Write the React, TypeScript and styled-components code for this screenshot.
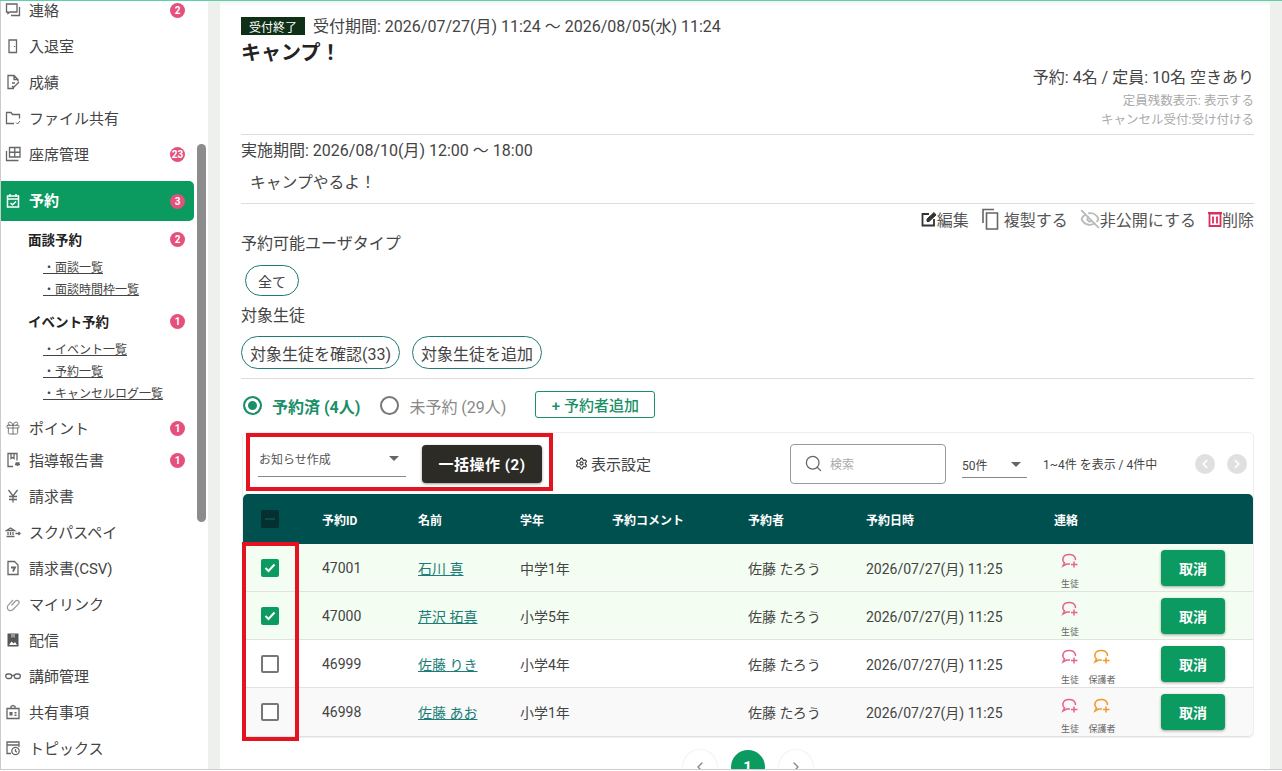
import React from 'react';
import styled, { createGlobalStyle } from 'styled-components';
import { ChevronLeft, ChevronRight, EyeOff, Gift, Search, Settings } from 'lucide-react';

const GlobalStyle = createGlobalStyle`
	html, body {
		margin: 0;
		height: 100%;
		overflow: hidden;
		background: #fff;
		font-family: Roboto, 'Noto Sans CJK JP', sans-serif;
		color: #333;
	}
	* {
		box-sizing: border-box;
	}
`;

const Ico = ({ children }: { children: React.ReactNode }) => (
	<svg width='16' height='16' viewBox='0 0 16 16' fill='none' stroke='#666' strokeWidth='1.3'>
		{children}
	</svg>
);

const navTop = [
	{ label: '連絡', badge: '2', icon: <Ico><path d='M1.500 2h10.500v8H5L3 11.500V10H1.500zM14.500 5v8.500H6' /></Ico> },
	{ label: '入退室', icon: <Ico><path d='M4 2h7.500v12.500H4zM9.500 8v1' /></Ico> },
	{ label: '成績', icon: <Ico><path d='M9 14.500H3V1.500h6l4 4v2M9 1.500v4h4M7 9h3M7 12l1.500 1.500L14 8' /></Ico> },
	{ label: 'ファイル共有', icon: <Ico><path d='M9 13.500H1.500V2.500H6l1.500 2h7v4' /><path d='M11 12.500l1.500 1.500 2.500-3' strokeWidth='1' /></Ico> },
	{ label: '座席管理', badge: '23', icon: <Ico><path d='M4.500 1.500H15v9.500H4.500zM9.750 1.500V11M4.500 6.250H15M1.500 5v9.500h12' /></Ico> },
];

const navBottom = [
	{ label: 'ポイント', badge: '1', icon: <Gift size={16} color='#666' strokeWidth={1.3} /> },
	{ label: '指導報告書', badge: '1', icon: <Ico><path d='M8 14.500H3V1.500h9v7M6 1.500v5l1.500-1 1.500 1v-5' /><path d='M10 12.500h5M10.500 11h4M12.500 14v-1' strokeWidth='1.600' /></Ico> },
	{ label: '請求書', icon: <Ico><path d='M3.500 2L8 8l4.500-6M8 8v6.500M4 8.500h8M4 11.500h8' /></Ico> },
	{ label: 'スクパスペイ', icon: <Ico><path d='M1.500 6.500L5.500 4l4 2.500zM1.500 12.500h8M3 8v3M5.500 8v3M8 8v3M10.500 9.500H15M13.500 8L15 9.500 13.500 11' /></Ico> },
	{ label: '請求書(CSV)', icon: <Ico><path d='M3 1.500h6.500L13 5v9.500H3z' /><path d='M6 7.500h4l-2 4' strokeWidth='1.800' /></Ico> },
	{ label: 'マイリンク', icon: <svg width='16' height='16' viewBox='0 0 16 16' fill='none' stroke='#999' strokeWidth='1.200'><path d='M6.500 9.500l4-4.500c1-1 2.300-.8 3 0 .7.800.7 2 0 2.800L8 13.500c-1.500 1.500-3.500 1.300-4.700.2C2 12.500 2 10.500 3.300 9.200L8 4' /></svg> },
	{ label: '配信', icon: <svg width='16' height='16' viewBox='0 0 16 16'><path d='M2.500 1.500h11v13h-11z' fill='#555' /><path d='M4 13l2.500-3.500 2 2 1.500-1.500 2 3z' fill='#fff' /><path d='M6 1.500h4v4.500L8 5 6 6z' fill='#999' /></svg> },
	{ label: '講師管理', icon: <svg width='16' height='16' viewBox='0 0 16 16' fill='none' stroke='#666' strokeWidth='1.300'><rect x='0.700' y='6' width='6' height='4.500' rx='2.200' /><rect x='9.300' y='6' width='6' height='4.500' rx='2.200' /><path d='M6.700 7.500h2.600' /></svg> },
	{ label: '共有事項', icon: <Ico><path d='M2 4.500h12v10H2zM6 4.500V2.500l2-1 2 1v2' /><path d='M4.500 8h3v3.500h-3zM9.500 8h2v1.500h-2zM9.500 10.500h2v1.500h-2z' fill='#666' stroke='none' /></Ico> },
	{ label: 'トピックス', icon: <Ico><path d='M6 13.500H2V2h12v5M2 5h12' /><circle cx='10.500' cy='11' r='3.700' /><path d='M10.500 9v2.200l1.500 1' /></Ico> },
];

const rows = [
	{ id: '47001', name: '石川 真', grade: '中学1年', checked: true, parent: false, tone: 'selected' },
	{ id: '47000', name: '芹沢 拓真', grade: '小学5年', checked: true, parent: false, tone: 'selected' },
	{ id: '46999', name: '佐藤 りき', grade: '小学4年', checked: false, parent: true, tone: 'plain' },
	{ id: '46998', name: '佐藤 あお', grade: '小学1年', checked: false, parent: true, tone: 'gray' },
];

const ChatPlus = ({ color }: { color: string }) => (
	<svg width='18' height='16' viewBox='0 0 18 16' fill='none' stroke={color} strokeWidth='1.500'>
		<path d='M9 11H5.500L2 13l1.500-3.200C2 8.500 1.500 7 2 5.200 2.700 2.800 5 1.500 8 1.500s5.600 1.300 6.300 3.700c.2.700.2 1.400.1 2' />
		<path d='M13 8.500v6M10 11.500h6.500' />
	</svg>
);

export default function App() {
	return (
		<Page>
			<GlobalStyle />
			<Sidebar>
				<NavList>
					{navTop.map(item => (
						<NavRow key={item.label}>
							<NavIcon>{item.icon}</NavIcon>
							<span>{item.label}</span>
							{item.badge && <Badge>{item.badge}</Badge>}
						</NavRow>
					))}
					<ActiveRow>
						<NavIcon>
							<svg width='16' height='16' viewBox='0 0 16 16' fill='none' stroke='#fff' strokeWidth='1.500'>
								<path d='M2.500 3h11v11h-11zM5 1v3M11 1v3M2.500 6h11M5.500 10l2 1.800L11 8.500' />
							</svg>
						</NavIcon>
						<span>予約</span>
						<Badge>3</Badge>
					</ActiveRow>
					<SubHeading $top={7}>
						<span>面談予約</span>
						<Badge>2</Badge>
					</SubHeading>
					<SubLinks>
						<SubLink>・面談一覧</SubLink>
						<SubLink>・面談時間枠一覧</SubLink>
					</SubLinks>
					<SubHeading $top={10}>
						<span>イベント予約</span>
						<Badge>1</Badge>
					</SubHeading>
					<SubLinks>
						<SubLink>・イベント一覧</SubLink>
						<SubLink>・予約一覧</SubLink>
						<SubLink>・キャンセルログ一覧</SubLink>
					</SubLinks>
					<BottomGroup>
						{navBottom.map((item, i) => (
							<NavRow key={item.label} $short={i === 0}>
								<NavIcon>{item.icon}</NavIcon>
								<span>{item.label}</span>
								{item.badge && <Badge>{item.badge}</Badge>}
							</NavRow>
						))}
					</BottomGroup>
				</NavList>
				<ScrollThumb />
			</Sidebar>

			<Main>
				<StatusLine>
					<StatusTag>受付終了</StatusTag>
					<span>受付期間: 2026/07/27(月) 11:24 〜 2026/08/05(水) 11:24</span>
				</StatusLine>
				<Title>キャンプ！</Title>
				<Capacity>予約: 4名 / 定員: 10名 空きあり</Capacity>
				<Note>定員残数表示: 表示する</Note>
				<Note>キャンセル受付:受け付ける</Note>
				<Rule $top={5} />
				<Period>実施期間: 2026/08/10(月) 12:00 〜 18:00</Period>
				<Description>キャンプやるよ！</Description>
				<Rule $top={8} />
				<Actions>
					<Action>
						<svg width='16' height='16' viewBox='0 0 16 16' fill='none' stroke='#333' strokeWidth='1.800'>
							<path d='M8 3H1.500v11.500H13V8' />
							<path d='M6 10.500V8l7-6.500L15 4l-7 6.500z' fill='#333' strokeWidth='1' />
						</svg>
						編集
					</Action>
					<Action>
						<svg width='23' height='22' viewBox='0 0 23 22' fill='none' stroke='#666' strokeWidth='1.600'>
							<path d='M2 15V1.500h11M5.500 5h11v16h-11z' />
						</svg>
						複製する
					</Action>
					<Action><EyeOff size={20} color='#bbb' strokeWidth={2.2} />非公開にする</Action>
					<Action>
						<svg width='14' height='16' viewBox='0 0 14 16' fill='none' stroke='#d9305f' strokeWidth='1.800'>
							<path d='M1.500 2.500h11v12.500h-11zM0 2h14M5 5.500v7M9 5.500v7' />
						</svg>
						削除
					</Action>
				</Actions>
				<SectionLabel>予約可能ユーザタイプ</SectionLabel>
				<SmallPill>全て</SmallPill>
				<SectionLabel $top={10}>対象生徒</SectionLabel>
				<PillRow>
					<Pill>対象生徒を確認(33)</Pill>
					<Pill>対象生徒を追加</Pill>
				</PillRow>
				<Rule $top={9} />
				<RadioRow>
					<Radio $on />
					<RadioLabel $on>予約済 (4人)</RadioLabel>
					<Radio />
					<RadioLabel>未予約 (29人)</RadioLabel>
					<AddButton>+ 予約者追加</AddButton>
				</RadioRow>

				<TableCard>
					<Toolbar>
						<BulkSelect>
							<span>お知らせ作成</span>
							<Caret />
						</BulkSelect>
						<BulkButton>一括操作 (2)</BulkButton>
						<SettingsLink><Settings size={13} color='#333' />表示設定</SettingsLink>
						<SearchBox>
							<Search size={19} color='#666' strokeWidth={1.6} />
							<span>検索</span>
						</SearchBox>
						<PerPage>
							<span>50件</span>
							<Caret />
						</PerPage>
						<RangeText>1~4件 を表示 / 4件中</RangeText>
						<PageDot $first><ChevronLeft size={14} color='#fff' strokeWidth={3} /></PageDot>
						<PageDot><ChevronRight size={14} color='#fff' strokeWidth={3} /></PageDot>
					</Toolbar>
					<HeadRow>
						<CheckCell><HeadCheck /></CheckCell>
						<span>予約ID</span>
						<span>名前</span>
						<span>学年</span>
						<span>予約コメント</span>
						<span>予約者</span>
						<span>予約日時</span>
						<span>連絡</span>
						<span />
					</HeadRow>
					{rows.map(row => (
						<BodyRow key={row.id} $tone={row.tone}>
							<CheckCell>
								<RowCheck $checked={row.checked}>
									{row.checked && (
										<svg width='14' height='14' viewBox='0 0 14 14' fill='none' stroke='#fff' strokeWidth='2'>
											<path d='M2.500 7l3 3 6-6.500' />
										</svg>
									)}
								</RowCheck>
							</CheckCell>
							<span>{row.id}</span>
							<NameLink>{row.name}</NameLink>
							<span>{row.grade}</span>
							<span />
							<span>佐藤 たろう</span>
							<span>2026/07/27(月) 11:25</span>
							<ContactCell>
								<ContactItem>
									<ChatPlus color='#e5648f' />
									<small>生徒</small>
								</ContactItem>
								{row.parent && (
									<ContactItem>
										<ChatPlus color='#f09a2e' />
										<small>保護者</small>
									</ContactItem>
								)}
							</ContactCell>
							<CancelButton>取消</CancelButton>
						</BodyRow>
					))}
				</TableCard>
				<Pager>
					<PagerArrow><ChevronLeft size={16} color='#888' /></PagerArrow>
					<PagerCurrent>1</PagerCurrent>
					<PagerArrow><ChevronRight size={16} color='#888' /></PagerArrow>
				</Pager>
			</Main>

			<RedFrame $x={246} $y={433} $w={307} $h={58} />
			<RedFrame $x={242} $y={542} $w={57} $h={199} />
		</Page>
	);
}

const Page = styled.div`
	position: relative;
	display: flex;
	width: 1282px;
	height: 770px;
	overflow: hidden;
	background: #eef0ee;
	border-top: 1px solid #5fd0ae;
	border-bottom: 1px solid #ccc;
`;

const Sidebar = styled.aside`
	position: relative;
	flex: 0 0 208px;
	margin-top: -1px;
	overflow: hidden;
	background: #fff;
	border-left: 1px solid #ccc;
`;

const NavList = styled.nav`
	display: flex;
	flex-direction: column;
	margin-top: -8px;
`;

const NavRow = styled.div<{ $short?: boolean }>`
	display: flex;
	align-items: center;
	height: ${props => (props.$short ? '30px' : '36px')};
	padding: ${props => (props.$short ? '2px' : '0')} 9px 0 4px;
	width: 193px;
	font-size: 15px;
	color: #444;

	span:nth-child(2) {
		flex: 1;
		padding-bottom: 2px;
	}
`;

const ActiveRow = styled(NavRow)`
	height: 40px;
	margin-top: 9px;
	background: #0b9a5f;
	border-radius: 0 5px 5px 0;
	color: #fff;
	font-weight: 700;

	span:nth-child(2) {
		padding-bottom: 4px;
	}
`;

const NavIcon = styled.div`
	display: flex;
	justify-content: center;
	align-items: center;
	width: 16px;
	height: 20px;
	margin-right: 8px;
`;

const Badge = styled.b`
	display: flex;
	align-items: center;
	justify-content: center;
	width: 15px;
	height: 15px;
	border-radius: 50%;
	background: #e5507c;
	color: #fff;
	font-size: 10px;
	font-weight: 700;
`;

const SubHeading = styled.div<{ $top: number }>`
	display: flex;
	align-items: center;
	justify-content: space-between;
	width: 193px;
	height: 22px;
	margin-top: ${props => props.$top}px;
	padding: 0 9px 0 27px;
	font-size: 13.500px;
	font-weight: 700;
	color: #222;
`;

const SubLinks = styled.div`
	display: flex;
	flex-direction: column;
	align-items: flex-start;
	margin: 6px 0 0 42px;
`;

const SubLink = styled.a`
	display: block;
	height: 22px;
	padding-top: 4px;
	font-size: 12px;
	line-height: 16px;
	color: #444;
	text-decoration: underline;
`;

const BottomGroup = styled.div`
	display: flex;
	flex-direction: column;
	margin-top: 8px;
`;

const ScrollThumb = styled.div`
	position: absolute;
	top: 144px;
	left: 196px;
	width: 9px;
	height: 378px;
	border-radius: 5px;
	background: #8c8c8c;
`;

const Main = styled.main`
	flex: 0 0 1050px;
	margin-left: 12px;
	padding: 16px 16px 0 21px;
	background: #fff;
	box-shadow: inset 0 6px 6px -6px rgba(0, 0, 0, 0.12);
`;

const StatusLine = styled.div`
	display: flex;
	align-items: center;
	gap: 8px;
	height: 18px;
	font-size: 16px;
	color: #444;

	span:last-child {
		padding-bottom: 2px;
	}
`;

const StatusTag = styled.span`
	display: flex;
	align-items: center;
	justify-content: center;
	width: 64px;
	height: 18px;
	background: #0f2f17;
	color: #fff;
	font-size: 12px;
`;

const Title = styled.h1`
	margin: 4px 0 0;
	font-size: 20px;
	line-height: 28px;
	font-weight: 700;
	color: #222;
`;

const Capacity = styled.div`
	margin: 0 0 2px;
	text-align: right;
	font-size: 16px;
	line-height: 22px;
	color: #444;
`;

const Note = styled.div`
	text-align: right;
	font-size: 12.500px;
	line-height: 19px;
	color: #aaa;
`;

const Rule = styled.hr<{ $top: number }>`
	margin: ${props => props.$top}px 0 0;
	border: none;
	border-top: 1px solid #ddd;
`;

const Period = styled.div`
	margin-top: 4px;
	font-size: 16px;
	line-height: 24px;
	color: #444;
`;

const Description = styled.div`
	margin: 8px 0 0 9px;
	font-size: 15.800px;
	line-height: 24px;
	color: #444;
`;

const Actions = styled.div`
	display: flex;
	justify-content: flex-end;
	gap: 12px;
	height: 28px;
	margin-top: 2px;
	padding-bottom: 2px;
	font-size: 16px;
	color: #555;
`;

const Action = styled.div`
	display: flex;
	align-items: center;
`;

const SectionLabel = styled.div<{ $top?: number }>`
	margin-top: ${props => props.$top ?? 0}px;
	padding-top: 1px;
	font-size: 16px;
	line-height: 18px;
	color: #444;
`;

const Pill = styled.button`
	height: 33px;
	padding: 0 8px;
	border: 1px solid #1f7a74;
	border-radius: 17px;
	background: #fff;
	font: inherit;
	font-size: 16px;
	color: #444;
`;

const SmallPill = styled(Pill)`
	display: block;
	width: 54px;
	height: 31px;
	margin: 12px 0 0 4px;
	padding: 0;
	font-size: 14px;
`;

const PillRow = styled.div`
	display: flex;
	gap: 12px;
	margin-top: 11px;
`;

const RadioRow = styled.div`
	display: flex;
	align-items: center;
	height: 53px;
	padding: 0 0 0 2px;
`;

const Radio = styled.span<{ $on?: boolean }>`
	width: 19px;
	height: 19px;
	margin-right: 10px;
	border-radius: 50%;
	border: 2px solid ${props => (props.$on ? '#1b8f68' : '#777')};
	background: ${props => (props.$on ? '#1b8f68' : '#fff')};
	box-shadow: ${props => (props.$on ? 'inset 0 0 0 3px #fff' : 'none')};
`;

const RadioLabel = styled.span<{ $on?: boolean }>`
	margin-right: ${props => (props.$on ? '20px' : '29px')};
	font-size: 16px;
	font-weight: ${props => (props.$on ? 700 : 400)};
	color: ${props => (props.$on ? '#1b8f68' : '#888')};
`;

const AddButton = styled.button`
	width: 120px;
	height: 27px;
	margin-bottom: 2px;
	padding: 0;
	border: 1px solid #1b8f68;
	border-radius: 3px;
	background: #fff;
	font: inherit;
	font-size: 15px;
	font-weight: 500;
	color: #1b8f68;
`;

const TableCard = styled.section`
	margin: 0 0 0 1px;
	border: 1px solid #eee;
	border-radius: 5px;
`;

const Toolbar = styled.div`
	display: flex;
	align-items: center;
	height: 61px;
	padding-left: 15px;
`;

const BulkSelect = styled.div`
	display: flex;
	align-items: center;
	justify-content: space-between;
	align-self: flex-start;
	width: 148px;
	height: 32px;
	margin-top: 12px;
	padding: 0 7px 4px 1px;
	border-bottom: 1px solid #888;
	font-size: 12px;
	color: #555;
`;

const Caret = styled.i`
	width: 0;
	height: 0;
	border-left: 5px solid transparent;
	border-right: 5px solid transparent;
	border-top: 5px solid #666;
`;

const BulkButton = styled.button`
	width: 120px;
	height: 38px;
	margin-left: 16px;
	padding: 0;
	border: none;
	border-radius: 4px;
	background: #2d2b26;
	color: #fff;
	font: inherit;
	font-size: 15px;
	font-weight: 700;
	letter-spacing: 0.5px;
	box-shadow: 0 1px 3px rgba(0, 0, 0, 0.4);
`;

const SettingsLink = styled.div`
	display: flex;
	align-items: center;
	gap: 3px;
	margin-left: 33px;
	width: 215px;
	font-size: 15px;
	color: #444;
`;

const SearchBox = styled.div`
	display: flex;
	align-items: center;
	gap: 7px;
	width: 156px;
	height: 40px;
	padding-left: 13px;
	border: 1px solid #999;
	border-radius: 4px;
	font-size: 12px;
	color: #aaa;
`;

const PerPage = styled.div`
	display: flex;
	align-items: center;
	justify-content: space-between;
	align-self: flex-start;
	width: 65px;
	height: 32px;
	margin: 13px 0 0 16px;
	padding: 6px 6px 0 0;
	border-bottom: 1px solid #888;
	font-size: 12px;
	color: #444;
`;

const RangeText = styled.div`
	margin-left: 16px;
	width: 152px;
	font-size: 12px;
	color: #444;
	white-space: nowrap;
`;

const PageDot = styled.span<{ $first?: boolean }>`
	display: flex;
	align-items: center;
	justify-content: center;
	width: 20px;
	height: 20px;
	margin-right: ${props => (props.$first ? '12px' : '0')};
	border-radius: 50%;
	background: #e0e0e0;
`;

const columns = '79px 96px 102px 92px 136px 118px 188px 107px 1fr';

const HeadRow = styled.div`
	display: grid;
	grid-template-columns: ${columns};
	align-items: center;
	height: 50px;
	background: #00504f;
	border-radius: 5px 5px 0 0;
	color: #fff;
	font-size: 12px;
	font-weight: 700;
`;

const CheckCell = styled.div`
	display: flex;
	padding-left: 18px;
`;

const HeadCheck = styled.div`
	position: relative;
	width: 18px;
	height: 18px;
	border-radius: 2px;
	background: #062f30;

	&::after {
		content: '';
		position: absolute;
		left: 4px;
		right: 4px;
		top: 8px;
		height: 2px;
		background: #00504f;
	}
`;

const toneColors: Record<string, string> = {
	selected: '#f3fdf1',
	plain: '#fff',
	gray: '#f9f9f9',
};

const BodyRow = styled.div<{ $tone: string }>`
	display: grid;
	grid-template-columns: ${columns};
	align-items: center;
	height: 48px;
	background: ${props => toneColors[props.$tone]};
	border-bottom: 1px solid #e2e2e2;
	font-size: 14px;
	color: #444;

	&:last-child {
		height: 49px;
		border-radius: 0 0 5px 5px;
	}
`;

const RowCheck = styled.div<{ $checked: boolean }>`
	display: flex;
	align-items: center;
	justify-content: center;
	width: 18px;
	height: 18px;
	border-radius: 2px;
	border: ${props => (props.$checked ? 'none' : '2px solid #777')};
	background: ${props => (props.$checked ? '#0b9a5f' : '#fff')};
`;

const NameLink = styled.a`
	color: #1b7d78;
	text-decoration: underline;
`;

const ContactCell = styled.div`
	display: flex;
	gap: 8px;
	padding: 8px 0 0 4px;
`;

const ContactItem = styled.div`
	display: flex;
	flex-direction: column;
	align-items: center;
	width: 24px;
	gap: 9px;

	small {
		font-size: 9px;
		line-height: 12px;
		white-space: nowrap;
		color: #666;
	}
`;

const CancelButton = styled.button`
	width: 64px;
	height: 36px;
	padding: 0;
	border: none;
	border-radius: 4px;
	background: #0b9a5f;
	color: #fff;
	font: inherit;
	font-size: 14px;
	font-weight: 700;
	box-shadow: 0 1px 3px rgba(0, 0, 0, 0.35);
`;

const Pager = styled.div`
	display: flex;
	justify-content: center;
	align-items: flex-start;
	gap: 14px;
	margin-top: 12px;
`;

const PagerArrow = styled.span`
	display: flex;
	align-items: center;
	justify-content: center;
	width: 34px;
	height: 34px;
	border-radius: 50%;
	background: #fff;
	box-shadow: 0 0 2px rgba(0, 0, 0, 0.15);
`;

const PagerCurrent = styled(PagerArrow)`
	background: #0b9a5f;
	color: #fff;
	font-size: 15px;
	font-weight: 700;
	box-shadow: none;
`;

const RedFrame = styled.div<{ $x: number; $y: number; $w: number; $h: number }>`
	position: absolute;
	left: ${props => props.$x}px;
	top: ${props => props.$y - 1}px;
	width: ${props => props.$w}px;
	height: ${props => props.$h}px;
	border: 4px solid #e3141f;
	pointer-events: none;
`;
